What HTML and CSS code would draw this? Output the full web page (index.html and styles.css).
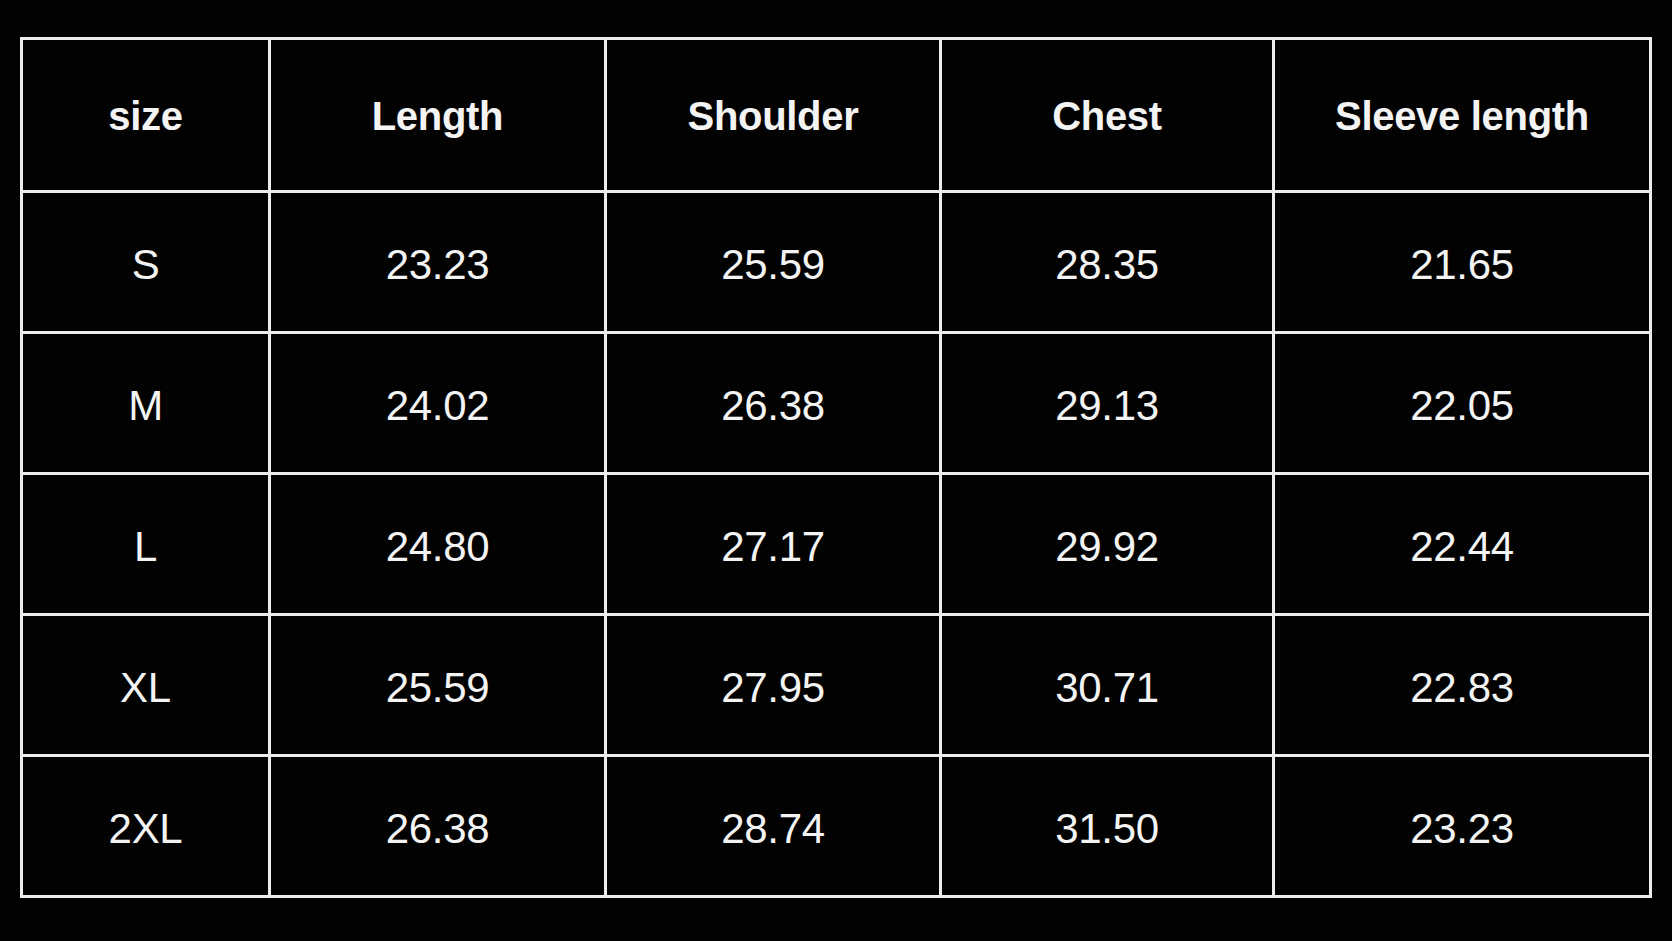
FILE: index.html
```html
<!DOCTYPE html>
<html>
<head>
<meta charset="utf-8">
<link rel="stylesheet" href="styles.css">
</head>
<body>
<div class="page">
<table class="sizes">
<colgroup>
<col class="c1"><col class="c2"><col class="c3"><col class="c4"><col class="c5">
</colgroup>
<thead>
<tr><th>size</th><th>Length</th><th>Shoulder</th><th>Chest</th><th>Sleeve length</th></tr>
</thead>
<tbody>
<tr><td>S</td><td>23.23</td><td>25.59</td><td>28.35</td><td>21.65</td></tr>
<tr><td>M</td><td>24.02</td><td>26.38</td><td>29.13</td><td>22.05</td></tr>
<tr><td>L</td><td>24.80</td><td>27.17</td><td>29.92</td><td>22.44</td></tr>
<tr><td>XL</td><td>25.59</td><td>27.95</td><td>30.71</td><td>22.83</td></tr>
<tr><td>2XL</td><td>26.38</td><td>28.74</td><td>31.50</td><td>23.23</td></tr>
</tbody>
</table>
</div>
</body>
</html>
```

FILE: styles.css
```css
html, body {
  margin: 0;
  padding: 0;
  background: #020202;
}
body {
  width: 1672px;
  height: 941px;
  overflow: hidden;
  font-family: "Liberation Sans", Arial, Helvetica, sans-serif;
  color: #f4f4f4;
}
.page {
  padding: 37px 0 0 20px;
}
.sizes {
  border-collapse: collapse;
  table-layout: fixed;
  width: 1629px;
}
.c1 { width: 248px; }
.c2 { width: 336px; }
.c3 { width: 335px; }
.c4 { width: 333px; }
.c5 { width: 377px; }
.sizes th, .sizes td {
  border: 3px solid #ececec;
  padding: 0;
  text-align: center;
  vertical-align: middle;
}
.sizes th {
  height: 148px;
  padding-top: 2px;
  font-size: 40px;
  font-weight: bold;
  letter-spacing: -0.3px;
}
.sizes td {
  height: 132px;
  padding-top: 6px;
  font-size: 42px;
  font-weight: normal;
  letter-spacing: -0.3px;
}
```
